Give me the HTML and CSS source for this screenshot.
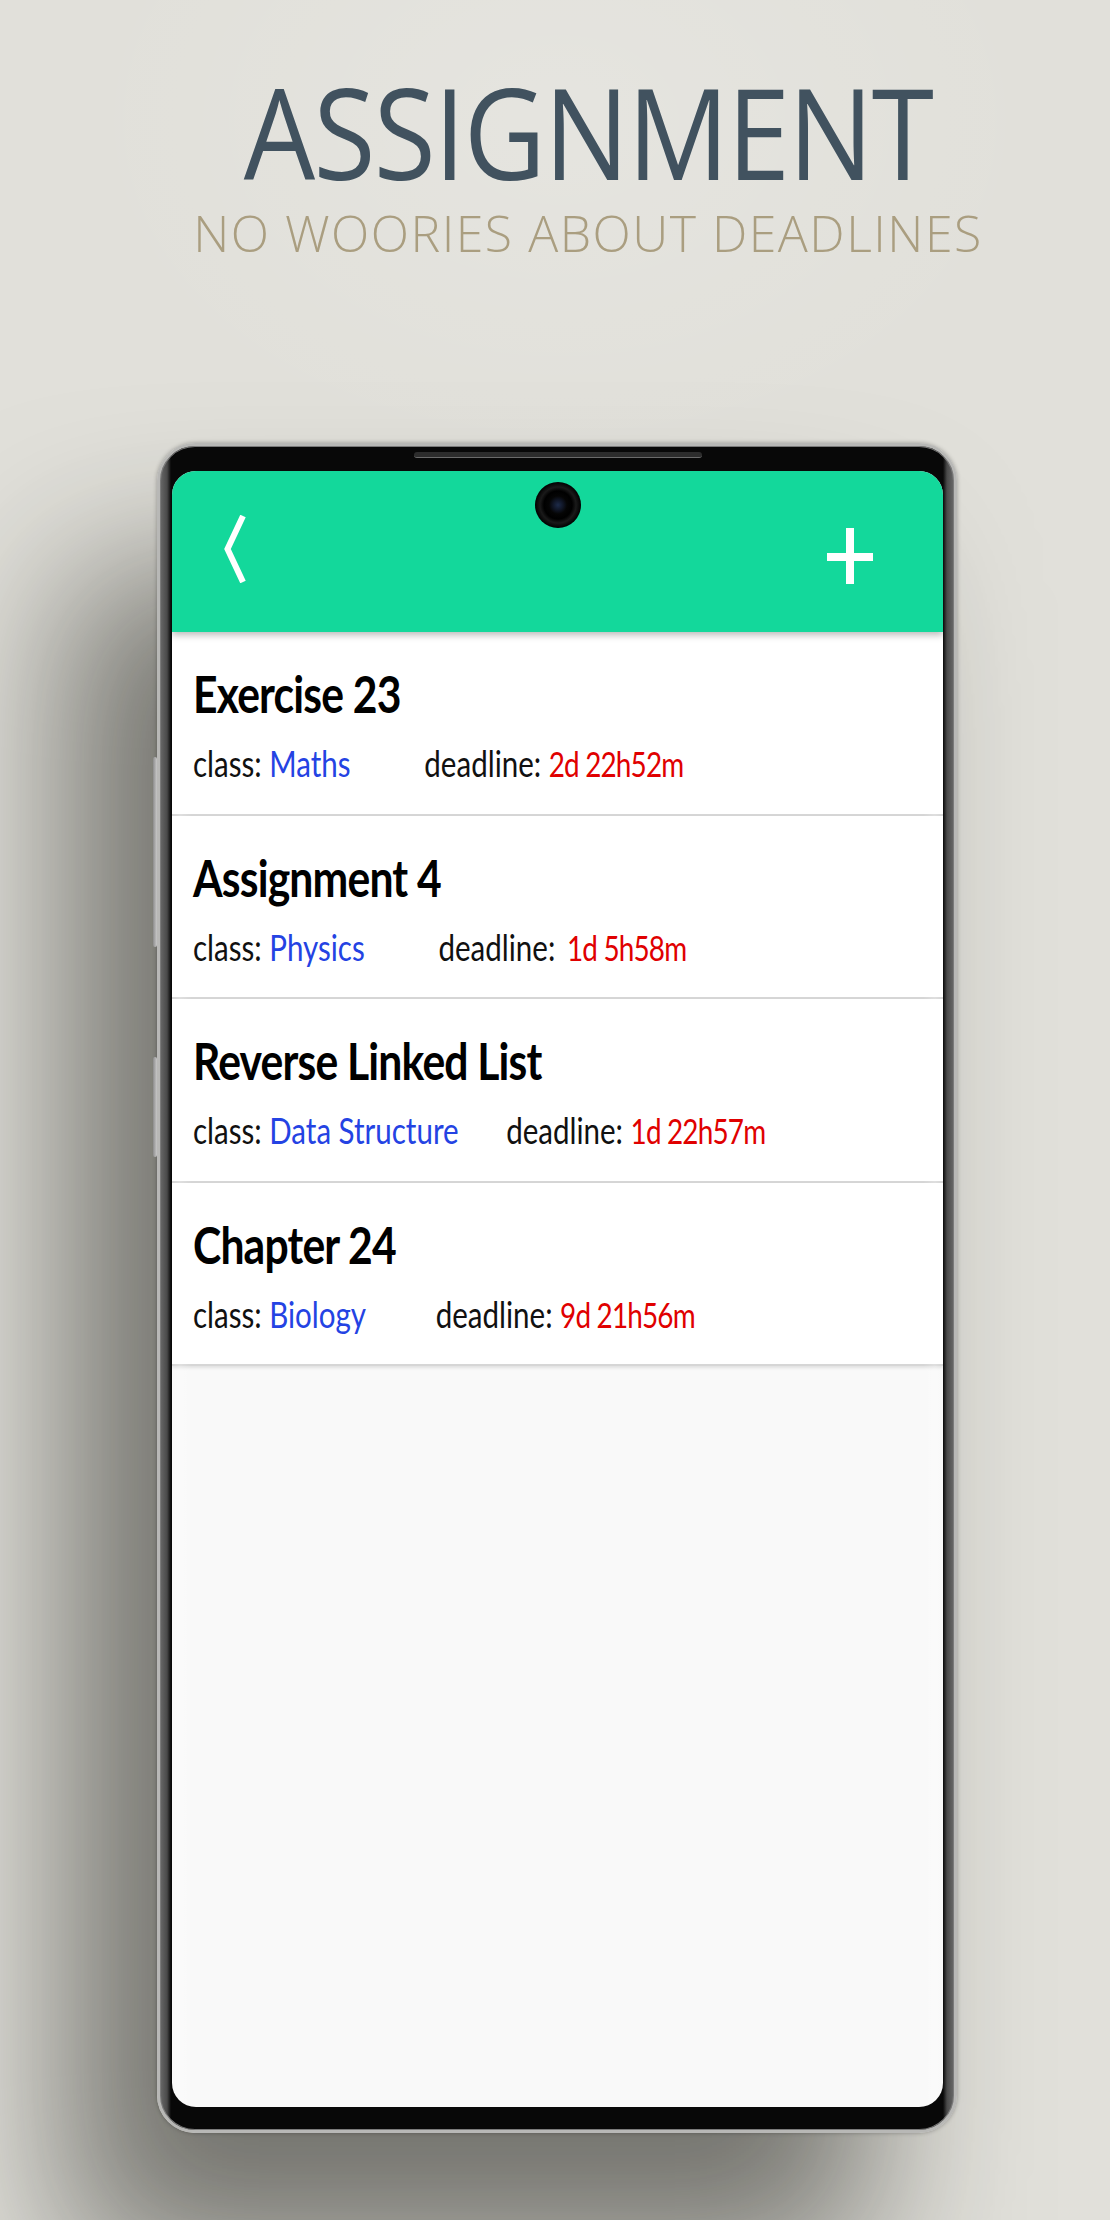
FILE: index.html
```html
<!DOCTYPE html>
<html lang="en">
<head>
<meta charset="utf-8">
<title>Assignment</title>
<link rel="stylesheet" href="styles.css">
</head>
<body>
<main class="page">
  <header class="hero">
    <h1 class="hero-title">ASSIGNMENT</h1>
    <p class="hero-sub">NO WOORIES ABOUT DEADLINES</p>
  </header>

  <div class="phone">
    <div class="speaker"></div>
    <div class="screen">
      <div class="camera"></div>
      <div class="appbar">
        <svg class="back" width="22" height="68" viewBox="0 0 22 68" aria-label="Back">
          <polyline points="19,1 3.5,34 19,67" fill="none" stroke="#fff" stroke-width="6" stroke-linejoin="miter" stroke-miterlimit="10"/>
        </svg>
        <svg class="add" width="46" height="56" viewBox="0 0 46 56" aria-label="Add">
          <rect x="19" y="0" width="8" height="56" fill="#fff"/>
          <rect x="0" y="25" width="46" height="8" fill="#fff"/>
        </svg>
      </div>
      <ul class="list">
        <li class="item">
          <h2 class="item-title">Exercise 23</h2>
          <p class="meta"><span class="label">class:</span> <span class="cls">Maths</span><span class="label deadline">deadline:</span> <span class="due">2d 22h52m</span></p>
        </li>
        <li class="item">
          <h2 class="item-title">Assignment 4</h2>
          <p class="meta"><span class="label">class:</span> <span class="cls">Physics</span><span class="label deadline">deadline:</span> <span class="due due-wide">1d 5h58m</span></p>
        </li>
        <li class="item">
          <h2 class="item-title">Reverse Linked List</h2>
          <p class="meta"><span class="label">class:</span> <span class="cls">Data Structure</span><span class="label deadline deadline-tight">deadline:</span> <span class="due">1d 22h57m</span></p>
        </li>
        <li class="item">
          <h2 class="item-title">Chapter 24</h2>
          <p class="meta"><span class="label">class:</span> <span class="cls">Biology</span><span class="label deadline deadline-short">deadline:</span> <span class="due">9d 21h56m</span></p>
        </li>
      </ul>
    </div>
  </div>
</main>
</body>
</html>
```

FILE: styles.css
```css
* { box-sizing: border-box; }

html, body {
  margin: 0;
  padding: 0;
}

body {
  width: 1110px;
  height: 2220px;
  overflow: hidden;
  background: #e1e0da;
}

.page {
  width: 1110px;
  height: 2220px;
  padding-top: 67px;
  background:
    radial-gradient(ellipse 700px 500px at 560px 120px, rgba(255,255,255,0.15), rgba(255,255,255,0) 70%),
    #e1e0da;
}

.hero {
  padding-left: 66px;
  text-align: center;
}

.hero-title {
  margin: 0;
  font-family: "Open Sans", "Liberation Sans", sans-serif;
  font-weight: 400;
  font-size: 127px;
  line-height: 127px;
  color: #41525f;
  letter-spacing: -2px;
  transform: scaleX(0.89);
}

.hero-sub {
  margin: 14px 0 0;
  font-family: "Open Sans", "Liberation Sans", sans-serif;
  font-weight: 300;
  font-size: 50px;
  line-height: 50px;
  letter-spacing: 1.5px;
  color: #aa9e80;
}

/* Phone */
.phone {
  position: relative;
  width: 800px;
  height: 1690px;
  margin: 185px 0 0 157px;
  padding: 0 11px 0 12px;
  border: 3px solid #b8b8b6;
  border-radius: 38px;
  background: linear-gradient(to right,
    #6a6a6a 0, #4a4a4a 7px, #080808 11px,
    #080808 calc(100% - 11px), #4a4a4a calc(100% - 7px), #6a6a6a 100%);
  box-shadow:
    inset 0 0 0 1px #7a7a7a,
    0 0 4px rgba(0,0,0,0.3),
    -90px 130px 160px rgba(25,25,20,0.55);
}

.phone::before,
.phone::after {
  content: "";
  position: absolute;
  left: -7px;
  width: 4px;
  border-radius: 2px;
  background: linear-gradient(to right, #8c8c8c, #c8c8c8);
}

.phone::before { top: 311px; height: 190px; }
.phone::after { top: 611px; height: 100px; }

.speaker {
  width: 288px;
  height: 6px;
  margin: 6px auto 0;
  border-radius: 3px;
  background: #2c2c2c;
  border-bottom: 1px solid #6a6a6a;
}

.screen {
  position: relative;
  width: 771px;
  height: 1636px;
  margin-top: 13px;
  border-radius: 24px;
  overflow: hidden;
  background: #f9f9f9;
}

.screen::after {
  content: "";
  position: absolute;
  inset: 0;
  pointer-events: none;
  background: linear-gradient(to right,
    rgba(255,255,255,0) 0,
    rgba(255,255,255,0.22) 8px,
    rgba(255,255,255,0) 20px,
    rgba(255,255,255,0) calc(100% - 20px),
    rgba(255,255,255,0.22) calc(100% - 8px),
    rgba(255,255,255,0) 100%);
}

.camera {
  position: absolute;
  left: 363px;
  top: 11px;
  width: 46px;
  height: 46px;
  border-radius: 50%;
  z-index: 3;
  background: radial-gradient(circle at 50% 50%, #1d2b4a 0, #101626 5px, #050505 9px, #000 14px, #1a1a1a 18px, #000 23px);
}

.appbar {
  position: relative;
  z-index: 2;
  height: 161px;
  display: flex;
  justify-content: space-between;
  align-items: flex-start;
  padding: 0 70px 0 52px;
  background: #13d89b;
  box-shadow: 0 3px 7px rgba(0,0,0,0.28);
}

.back {
  display: block;
  margin-top: 44px;
}

.add {
  display: block;
  margin-top: 57px;
}

/* List */
.list {
  list-style: none;
  margin: 0;
  padding: 0;
}

.item {
  position: relative;
  height: 183.5px;
  padding: 35px 0 0 21px;
  background: #fff;
  border-bottom: 2px solid #d6d6d6;
  box-shadow: 0 2px 3px rgba(0,0,0,0.10);
}

.item-title {
  margin: 0;
  font-family: Lato, "Open Sans", sans-serif;
  font-weight: 700;
  font-size: 52px;
  line-height: 52px;
  color: #000;
  letter-spacing: -1px;
  white-space: nowrap;
  transform: scaleX(0.82);
  transform-origin: 0 50%;
}

.meta {
  margin: 25px 0 0;
  font-family: Lato, "Open Sans", sans-serif;
  font-weight: 400;
  font-size: 36px;
  line-height: 38px;
  white-space: nowrap;
  transform: scaleX(0.82);
  transform-origin: 0 50%;
}

.label { color: #111; }
.cls { color: #2443e3; }
.due {
  color: #e00000;
  font-size: 34px;
  letter-spacing: -1px;
}
.due-wide { margin-left: 5px; }

.deadline { margin-left: 90px; }
.deadline-tight { margin-left: 58px; }
.deadline-short { margin-left: 85px; }
```
